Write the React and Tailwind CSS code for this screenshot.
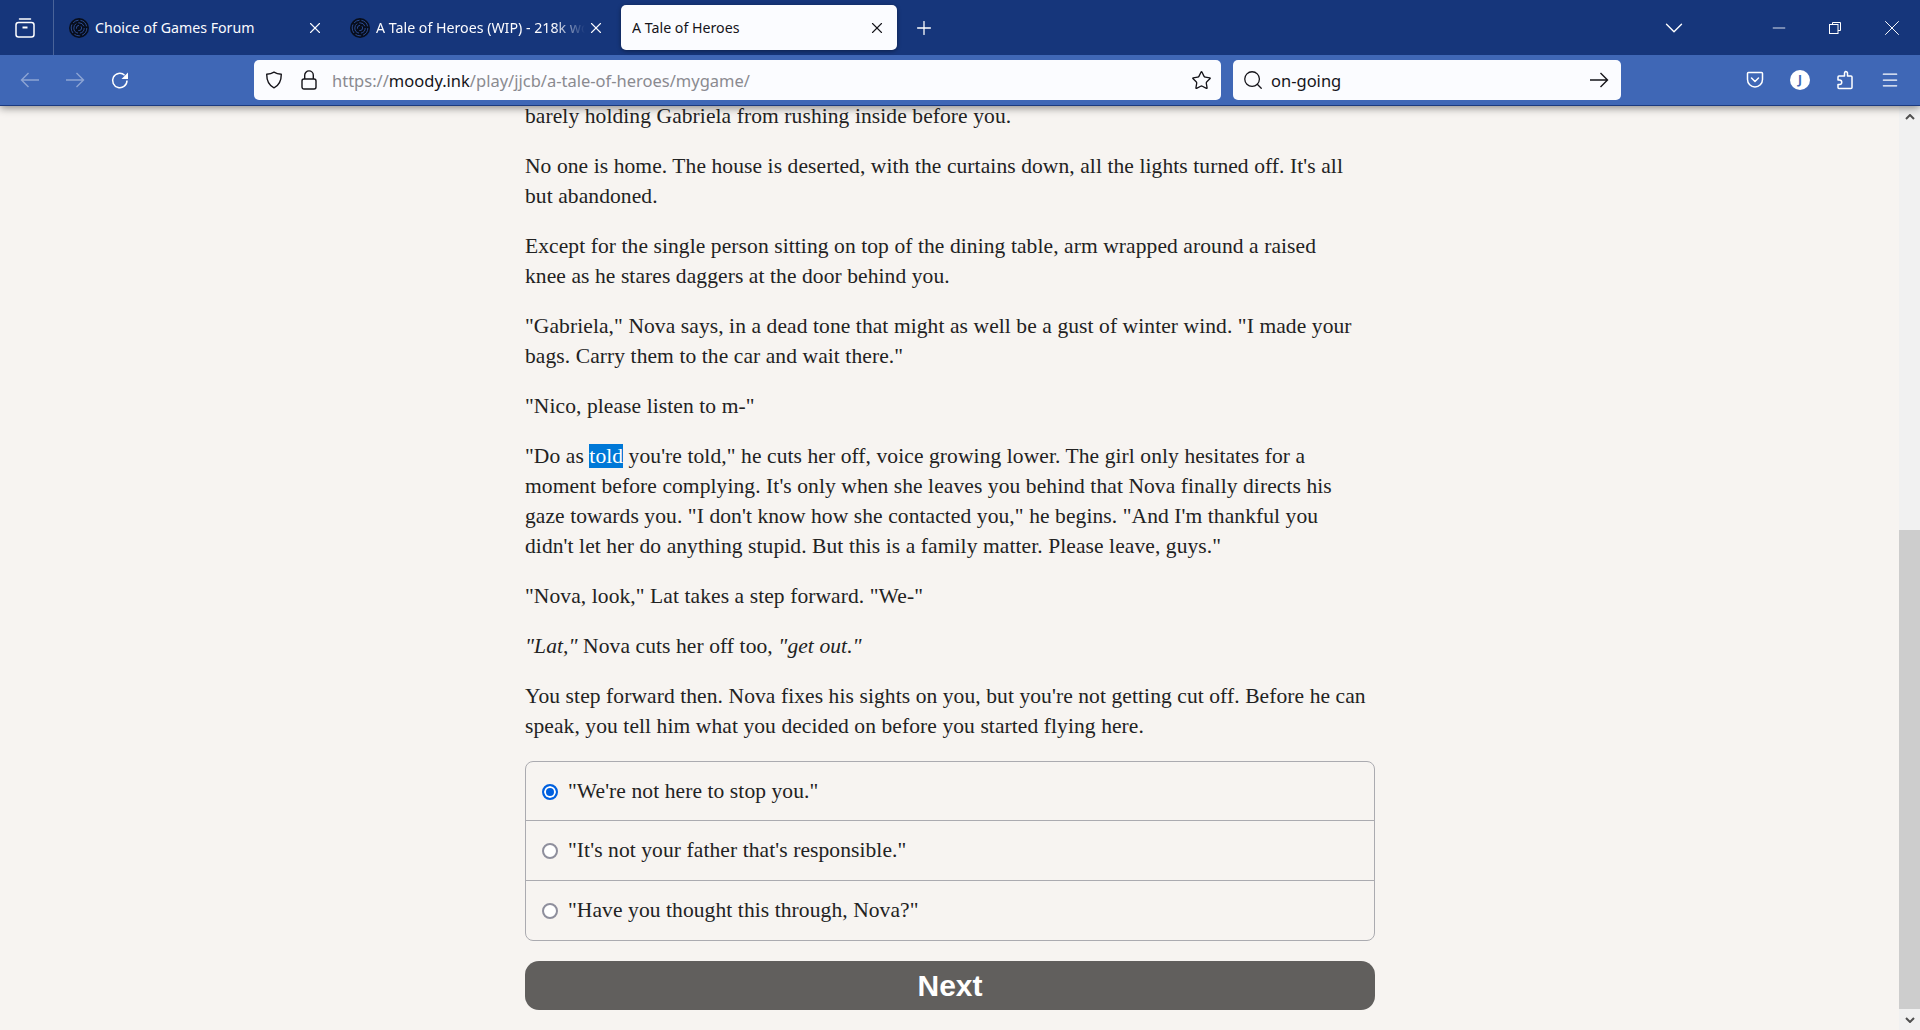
import { X, Plus, ChevronDown, Star, Search, Menu, Minus } from 'lucide-react';

// round maze favicon used by the two background tabs
const Favicon = () => (
    <svg viewBox="0 0 20 20" className="w-5 h-5 shrink-0">
        <circle cx="10" cy="10" r="10" fill="#070d1c" />
        <circle cx="10" cy="10" r="7.8" fill="none" stroke="#2a4a90" strokeWidth="1" strokeDasharray="9 2 6 2" />
        <circle cx="10" cy="10" r="5.2" fill="none" stroke="#2a4a90" strokeWidth="1" strokeDasharray="7 2 12 2" />
        <circle cx="10" cy="10" r="2.6" fill="none" stroke="#2a4a90" strokeWidth="1" strokeDasharray="5 2" />
    </svg>
);

const LongArrow = ({ flip, className }) => (
    <svg viewBox="0 0 20 20" className={`w-5 h-5 shrink-0 ${flip ? '-scale-x-100' : ''} ${className || ''}`} fill="none" stroke="currentColor" strokeWidth="1.4">
        <path d="M1.500 10H19M8.500 3l-7 7 7 7" />
    </svg>
);

const Tab = ({ title, active, fade }) => (
    <div className={`w-[276px] h-[45px] flex items-center shrink-0 rounded-[5px] ${active ? 'bg-[#fbfcff] text-[#15141a] pl-[11px] pr-[11px] shadow-[0_1px_4px_rgba(0,0,0,0.4)]' : 'text-[#fbfbfe] pl-[10px] pr-[11px]'}`}>
        {!active && <Favicon />}
        <span className={`flex-1 min-w-0 whitespace-nowrap overflow-hidden text-[14.2px] mt-[1px] ${active ? '' : 'ml-[6px]'} ${fade ? '[mask-image:linear-gradient(to_right,black_85%,transparent)]' : ''}`}>
            {title}
        </span>
        <X size={18} strokeWidth={1.5} className="shrink-0 ml-[2px]" />
    </div>
);

const Paragraph = ({ children }) => <p className="mb-5">{children}</p>;

const choices = [
    { label: `"We're not here to stop you."`, checked: true },
    { label: `"It's not your father that's responsible."` },
    { label: `"Have you thought this through, Nova?"` },
];

const TopBar = () => (
    <header className="relative z-10 shrink-0 shadow-[0_2px_8px_rgba(0,0,0,0.45)] font-['Noto_Sans',sans-serif]">
        {/* tab strip */}
        <div className="h-[55px] bg-[#16367b] flex items-center text-white">
            <div className="w-[54px] h-full flex items-center pl-[15px] border-r border-[#4a6499] shrink-0">
                <svg viewBox="0 0 20 20" className="w-5 h-5" fill="none" stroke="currentColor" strokeWidth="1.5">
                    <path d="M4.500 1h11" strokeLinecap="round" />
                    <rect x="1" y="4.500" width="18" height="14.500" rx="2.500" />
                    <path d="M7.500 9.500h5" strokeWidth="2" />
                </svg>
            </div>
            <div className="flex items-center gap-[5px] ml-[5px]">
                <Tab title="Choice of Games Forum" />
                <Tab title="A Tale of Heroes (WIP) - 218k words" fade />
                <Tab title="A Tale of Heroes" active />
            </div>
            <Plus size={22} strokeWidth={1.4} className="ml-[16px] shrink-0" />
            <ChevronDown size={30} strokeWidth={1.1} className="ml-[724px] shrink-0" />
            <Minus size={20} strokeWidth={1} className="ml-[80px] shrink-0" />
            <svg viewBox="0 0 14 14" className="w-[14px] h-[14px] ml-[39px] shrink-0" fill="none" stroke="currentColor" strokeWidth="1">
                <path d="M4.500 3V1.500h8v8H10" />
                <rect x="1.500" y="3.500" width="8.500" height="9" />
            </svg>
            <X size={26} strokeWidth={0.9} className="ml-[37px] shrink-0" />
        </div>
        {/* navigation toolbar */}
        <div className="h-[51px] bg-[#3f67b6] border-b border-[#1b3a80] flex items-center pl-[20px] text-white">
            <LongArrow className="opacity-40" />
            <LongArrow flip className="opacity-40 ml-[25px]" />
            <svg viewBox="0 0 20 20" className="w-5 h-5 ml-[25px] shrink-0" fill="none" stroke="currentColor" strokeWidth="1.5">
                <path d="M17 10.500a7.200 7.200 0 1 1-2.400-5.300" />
                <path d="M18 2.500V9h-6.500z" fill="currentColor" stroke="none" />
            </svg>
            <div className="ml-[124px] w-[967px] h-10 rounded-[5px] bg-[#fbfcff] flex items-center pl-[11px] pr-[9px] text-[#15141a] shrink-0">
                <svg viewBox="0 0 18 18" className="w-[18px] h-[18px] shrink-0" fill="none" stroke="currentColor" strokeWidth="1.4" strokeLinejoin="round">
                    <path d="M9 1.200c2 1.300 4.500 2 7.300 2.100 0 6-1.300 10.800-7.300 13.500C3 14.100 1.700 9.300 1.700 3.300 4.500 3.200 7 2.500 9 1.200z" />
                </svg>
                <svg viewBox="0 0 16 20" className="w-4 h-5 ml-[18px] shrink-0" fill="none" stroke="currentColor" strokeWidth="1.4">
                    <path d="M3.700 9V5.200a4.300 4.300 0 0 1 8.600 0V9" />
                    <rect x="1" y="9" width="14" height="10" rx="2" />
                </svg>
                <span className="ml-[15px] flex-1 text-[16.5px] mt-[3px] text-[#8a8a90] whitespace-nowrap">
                    https://<span className="text-[#15141a]">moody.ink</span>/play/jjcb/a-tale-of-heroes/mygame/
                </span>
                <Star size={21} strokeWidth={1.5} className="shrink-0" />
            </div>
            <div className="ml-[12px] w-[388px] h-10 rounded-[5px] bg-[#fbfcff] flex items-center pl-[9px] pr-[12px] text-[#15141a] shrink-0">
                <Search size={22} strokeWidth={1.4} className="shrink-0" />
                <span className="ml-[7px] flex-1 text-[16.5px] mt-[2px]">on-going</span>
                <LongArrow flip />
            </div>
            <svg viewBox="0 0 20 20" className="w-5 h-5 ml-[124px] shrink-0" fill="none" stroke="currentColor" strokeWidth="1.5">
                <path d="M3.500 2.500h13a1 1 0 0 1 1 1v6a7.500 7.500 0 0 1-15 0v-6a1 1 0 0 1 1-1z" />
                <path d="M6.500 8l3.500 3.500L13.500 8" strokeLinecap="round" strokeLinejoin="round" />
            </svg>
            <div className="w-5 h-5 ml-[25px] rounded-full bg-white text-[#3f67b6] text-[12px] font-bold flex items-center justify-center shrink-0">J</div>
            <svg viewBox="0 0 20 20" className="w-5 h-5 ml-[25px] shrink-0" fill="none" stroke="currentColor" strokeWidth="1.5" strokeLinejoin="round">
                <path d="M10.500 1.500a2 2 0 0 1 2 2V6h3.500a1 1 0 0 1 1 1v10.500a1 1 0 0 1-1 1H4a1 1 0 0 1-1-1V14.500h1.500a2 2 0 0 0 0-4.500H3V7a1 1 0 0 1 1-1h5.500V3.500a2 2 0 0 1 1-2z" />
            </svg>
            <Menu size={20} strokeWidth={1.5} className="ml-[25px] shrink-0" />
        </div>
    </header>
);

const Scrollbar = () => (
    <div className="w-[21px] shrink-0 bg-[#f1f1f1] flex flex-col text-[#505050]">
        <div className="h-[21px] flex items-center justify-center">
            <svg viewBox="0 0 10 6" className="w-[10px] h-[6px]" fill="none" stroke="currentColor" strokeWidth="2"><path d="M1 5l4-4 4 4" /></svg>
        </div>
        <div className="flex-1" />
        <div className="h-[479px] bg-[#cdcdcd]" />
        <div className="h-[21px] flex items-center justify-center">
            <svg viewBox="0 0 10 6" className="w-[10px] h-[6px]" fill="none" stroke="currentColor" strokeWidth="2"><path d="M1 1l4 4 4-4" /></svg>
        </div>
    </div>
);

const App = () => (
    <div className="h-[1030px] w-[1920px] overflow-hidden flex flex-col bg-[#f7f4f1]">
        <TopBar />
        <div className="flex-1 min-h-0 flex">
            <main className="flex-1 min-w-0 overflow-hidden">
                <div className="w-[850px] ml-[525px] -mt-[5px] text-[21.5px] tracking-[0.09px] leading-[30px] text-[#222222] font-['Liberation_Serif',serif]">
                    <Paragraph>barely holding Gabriela from rushing inside before you.</Paragraph>
                    <Paragraph>No one is home. The house is deserted, with the curtains down, all the lights turned off. It's all<br />but abandoned.</Paragraph>
                    <Paragraph>Except for the single person sitting on top of the dining table, arm wrapped around a raised<br />knee as he stares daggers at the door behind you.</Paragraph>
                    <Paragraph>"Gabriela," Nova says, in a dead tone that might as well be a gust of winter wind. "I made your<br />bags. Carry them to the car and wait there."</Paragraph>
                    <Paragraph>"Nico, please listen to m-"</Paragraph>
                    <Paragraph>
                        "Do as <span className="bg-[#0078d7] text-white">told</span> you're told," he cuts her off, voice growing lower. The girl only hesitates for a<br />
                        moment before complying. It's only when she leaves you behind that Nova finally directs his<br />
                        gaze towards you. "I don't know how she contacted you," he begins. "And I'm thankful you<br />
                        didn't let her do anything stupid. But this is a family matter. Please leave, guys."
                    </Paragraph>
                    <Paragraph>"Nova, look," Lat takes a step forward. "We-"</Paragraph>
                    <Paragraph><em>"Lat,"</em> Nova cuts her off too, <em>"get out."</em></Paragraph>
                    <Paragraph>You step forward then. Nova fixes his sights on you, but you're not getting cut off. Before he can<br />speak, you tell him what you decided on before you started flying here.</Paragraph>

                    <div className="h-[180px] border border-[#ababb0] rounded-[8px] grid grid-rows-3 divide-y divide-[#ababb0]">
                        {choices.map((choice) => (
                            <label key={choice.label} className="flex items-center pl-4">
                                <input
                                    type="radio"
                                    name="choice"
                                    defaultChecked={choice.checked}
                                    className="appearance-none w-4 h-4 m-0 mt-[1px] shrink-0 rounded-full border-2 border-[#8f8f9d] bg-white checked:border-[#0060df] checked:bg-[#0060df] checked:shadow-[inset_0_0_0_2px_white]"
                                />
                                <span className="ml-[10px]">{choice.label}</span>
                            </label>
                        ))}
                    </div>
                    <button className="mt-5 w-full h-[49px] rounded-[14px] bg-[#615f5d] text-white text-[30px] tracking-normal font-bold font-['Liberation_Sans',sans-serif]">Next</button>
                </div>
            </main>
            <Scrollbar />
        </div>
    </div>
);

export default App;
